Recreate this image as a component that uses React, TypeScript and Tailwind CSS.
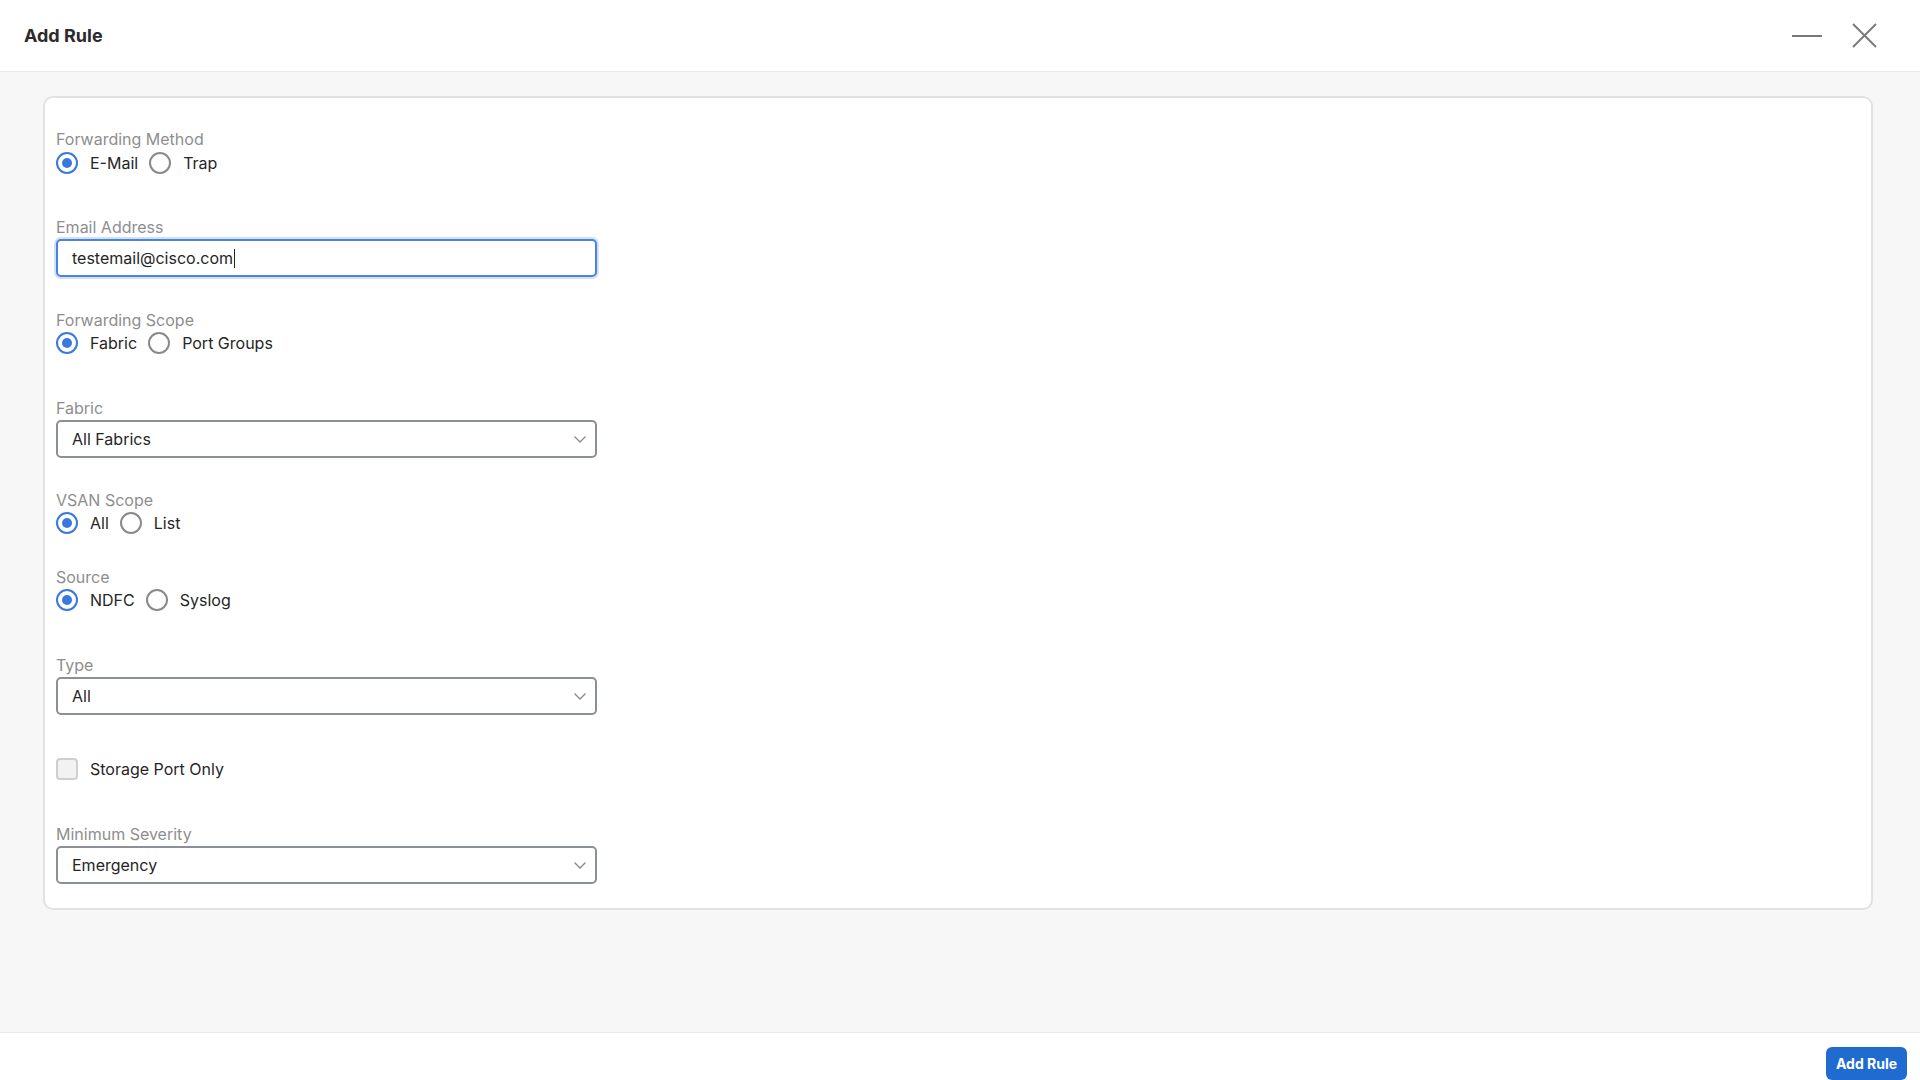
import React from "react";

function Label({ children, className = "" }: { children: React.ReactNode; className?: string }) {
  return <div className={"text-[16px] leading-[20px] text-[#8e8e8e] " + className}>{children}</div>;
}

function Radio({ label, checked }: { label: string; checked?: boolean }) {
  return (
    <div className="flex items-center gap-[12px]">
      <span
        className={
          "flex h-[22px] w-[22px] items-center justify-center rounded-full border-2 " +
          (checked ? "border-[#3a78de]" : "border-[#8a8a8a]")
        }
      >
        {checked && <span className="h-[10px] w-[10px] rounded-full bg-[#3a78de]" />}
      </span>
      <span className="text-[16px] leading-[22px] text-[#262626]">{label}</span>
    </div>
  );
}

function RadioRow({ items, className = "" }: { items: string[]; className?: string }) {
  return (
    <div className={"flex h-[22px] items-center gap-[11px] " + className}>
      {items.map((it, i) => (
        <Radio key={it} label={it} checked={i === 0} />
      ))}
    </div>
  );
}

function Select({ value }: { value: string }) {
  return (
    <div className="mt-[2px] flex h-[38px] w-[541px] items-center justify-between rounded-[5px] border-2 border-[#8b9096] bg-white pl-[14px] pr-[9px]">
      <span className="text-[16px] text-[#262626]">{value}</span>
      <svg width="12" height="7" viewBox="0 0 12 7" fill="none">
        <polyline points="0.5,0.5 6,6 11.5,0.5" stroke="#8a8a8a" strokeWidth="1.3" fill="none" />
      </svg>
    </div>
  );
}

export default function App() {
  return (
    <div className="flex h-[1080px] w-[1920px] flex-col bg-white font-['Inter',sans-serif]">
      <header className="flex h-[72px] shrink-0 items-center justify-between border-b border-[#e8e8e8] pl-[24px] pr-[43px]">
        <h1 className="text-[18px] font-bold text-[#2b2b2b]">Add Rule</h1>
        <div className="flex items-center gap-[30px]">
          <svg width="30" height="4" viewBox="0 0 30 4">
            <line x1="0" y1="2" x2="30" y2="2" stroke="#7a7a7a" strokeWidth="2" />
          </svg>
          <svg width="25" height="25" viewBox="0 0 25 25">
            <line x1="1" y1="1" x2="24" y2="24" stroke="#7a7a7a" strokeWidth="2" />
            <line x1="24" y1="1" x2="1" y2="24" stroke="#7a7a7a" strokeWidth="2" />
          </svg>
        </div>
      </header>

      <main className="flex-1 bg-[#f7f7f7] px-[43px] pt-[24px]">
        <div className="w-[1830px] rounded-[10px] border-2 border-[#e2e2e2] bg-white pb-[24px] pl-[11px] pt-[31px]">
          <Label>Forwarding Method</Label>
          <RadioRow className="mt-[3px]" items={["E-Mail", "Trap"]} />

          <Label className="mt-[43px]">Email Address</Label>
          <div className="mt-[2px] flex h-[38px] w-[541px] items-center rounded-[5px] border-2 border-[#4a82e0] bg-white pl-[14px] shadow-[0_0_0_2px_#d3e1f7]">
            <span className="text-[16px] text-[#262626]">testemail@cisco.com</span>
            <span className="ml-[1px] h-[19px] w-[1px] bg-[#262626]" />
          </div>

          <Label className="mt-[33px]">Forwarding Scope</Label>
          <RadioRow className="mt-[2px]" items={["Fabric", "Port Groups"]} />

          <Label className="mt-[44px]">Fabric</Label>
          <Select value="All Fabrics" />

          <Label className="mt-[32px]">VSAN Scope</Label>
          <RadioRow className="mt-[2px]" items={["All", "List"]} />

          <Label className="mt-[33px]">Source</Label>
          <RadioRow className="mt-[2px]" items={["NDFC", "Syslog"]} />

          <Label className="mt-[44px]">Type</Label>
          <Select value="All" />

          <div className="mt-[43px] flex h-[22px] items-center gap-[12px]">
            <span className="h-[22px] w-[22px] rounded-[4px] border-2 border-[#cfcfcf] bg-[#f2f2f2]" />
            <span className="text-[16px] leading-[22px] text-[#262626]">Storage Port Only</span>
          </div>

          <Label className="mt-[44px]">Minimum Severity</Label>
          <Select value="Emergency" />
        </div>
      </main>

      <footer className="flex h-[48px] shrink-0 items-start justify-end border-t border-[#e8e8e8] bg-white pr-[13px] pt-[14px]">
        <button className="h-[33px] w-[81px] rounded-[6px] bg-[#1f6bd0] text-[14px] font-bold text-white">
          Add Rule
        </button>
      </footer>
    </div>
  );
}
